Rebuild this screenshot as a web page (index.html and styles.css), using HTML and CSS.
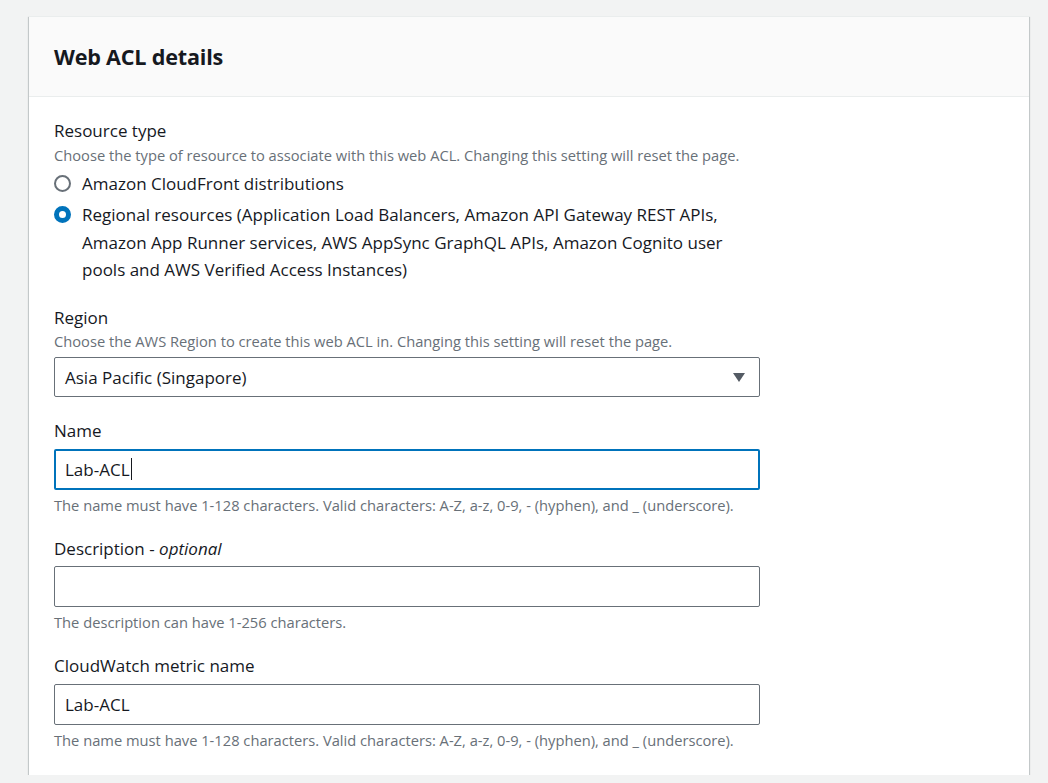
FILE: index.html
```html
<!DOCTYPE html>
<html lang="en">
<head>
<meta charset="utf-8">
<title>Web ACL details</title>
<link rel="stylesheet" href="styles.css">
</head>
<body>
<div class="card">
  <div class="card-header">
    <h2 class="card-title">Web ACL details</h2>
  </div>
  <div class="card-body">
    <div class="field">
      <div class="label">Resource type</div>
      <div class="hint">Choose the type of resource to associate with this web ACL. Changing this setting will reset the page.</div>
      <div class="radio-group">
        <div class="radio-row">
          <span class="radio"></span>
          <span class="radio-text">Amazon CloudFront distributions</span>
        </div>
        <div class="radio-row">
          <span class="radio checked"></span>
          <span class="radio-text">Regional resources (Application Load Balancers, Amazon API Gateway REST APIs, Amazon App Runner services, AWS AppSync GraphQL APIs, Amazon Cognito user pools and AWS Verified Access Instances)</span>
        </div>
      </div>
    </div>

    <div class="field">
      <div class="label">Region</div>
      <div class="hint">Choose the AWS Region to create this web ACL in. Changing this setting will reset the page.</div>
      <div class="control select">
        <span class="value">Asia Pacific (Singapore)</span>
        <svg class="caret" width="12" height="9" viewBox="0 0 12 9"><polygon points="0,0 12,0 6,9" fill="#545b64"/></svg>
      </div>
    </div>

    <div class="field">
      <div class="label">Name</div>
      <div class="control input focused"><span class="value">Lab-ACL</span><span class="cursor"></span></div>
      <div class="hint after">The name must have 1-128 characters. Valid characters: A-Z, a-z, 0-9, - (hyphen), and _ (underscore).</div>
    </div>

    <div class="field">
      <div class="label">Description - <i>optional</i></div>
      <div class="control input"></div>
      <div class="hint after">The description can have 1-256 characters.</div>
    </div>

    <div class="field">
      <div class="label">CloudWatch metric name</div>
      <div class="control input"><span class="value">Lab-ACL</span></div>
      <div class="hint after">The name must have 1-128 characters. Valid characters: A-Z, a-z, 0-9, - (hyphen), and _ (underscore).</div>
    </div>
  </div>
</div>
</body>
</html>
```

FILE: styles.css
```css
* { box-sizing: border-box; }

html, body {
  margin: 0;
  background: #f2f3f3;
}

body {
  padding: 16px 19px 0 29px;
  font-family: "Open Sans", "Noto Sans", sans-serif;
  color: #16191f;
}

.card {
  width: 1000px;
  background: #ffffff;
  border-top: 1px solid #eaeded;
  box-shadow: 0 1px 1px 0 rgba(0, 28, 36, 0.3), 1px 1px 1px 0 rgba(0, 28, 36, 0.15), -1px 1px 1px 0 rgba(0, 28, 36, 0.15);
}

.card-header {
  background: #fafafa;
  border-bottom: 1px solid #eaeded;
  padding: 26px 25px 25px;
}

.card-title {
  margin: 0;
  font-size: 21.6px;
  line-height: 28px;
  font-weight: 700;
  letter-spacing: -0.2px;
}

.card-body {
  padding: 20px 25px 25px;
}

.field + .field {
  margin-top: 20px;
}

.label {
  font-size: 17px;
  line-height: 27.5px;
}

.label i {
  font-style: italic;
}

.hint {
  font-size: 14.7px;
  line-height: 20px;
  color: #687078;
}

.hint.after {
  margin-top: 5px;
}

.radio-group {
  margin-top: 5px;
  display: flex;
  flex-direction: column;
  gap: 4px;
  width: 706px;
}

.radio-row {
  display: flex;
  align-items: flex-start;
}

.radio {
  flex: none;
  width: 17px;
  height: 17px;
  margin-top: 5px;
  margin-right: 11px;
  border: 2px solid #687078;
  border-radius: 50%;
  background: #fff;
}

.radio.checked {
  border: 5px solid #0073bb;
}

.radio-text {
  font-size: 17px;
  line-height: 27.5px;
}

.control {
  width: 706px;
  height: 40px;
  border: 1px solid #687078;
  border-radius: 2px;
  background: #fff;
  display: flex;
  align-items: center;
  padding: 0 11px 0 10px;
  font-size: 17px;
}

.select {
  margin-top: 6px;
  justify-content: space-between;
  padding-right: 14px;
}

.input {
  margin-top: 4px;
  height: 41px;
}

.input.focused {
  border: 2px solid #0073bb;
  padding-left: 9px;
}

.cursor {
  display: inline-block;
  width: 1px;
  height: 22px;
  background: #16191f;
  margin-left: 1px;
}
```
